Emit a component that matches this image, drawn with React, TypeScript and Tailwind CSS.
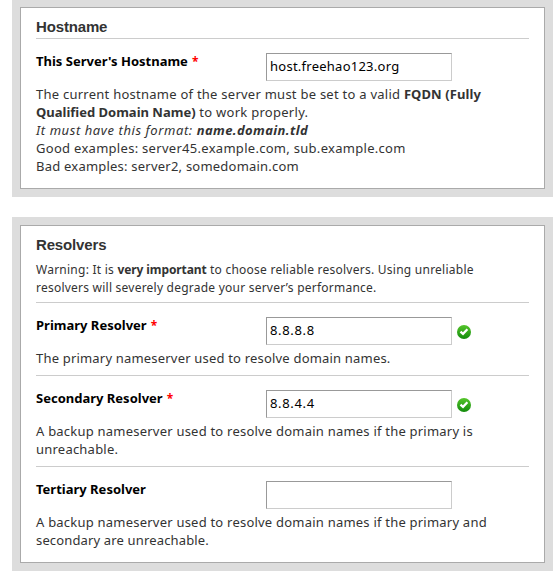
import type { ReactNode } from "react";

function Panel({ title, children }: { title: string; children: ReactNode }) {
  return (
    <section className="w-[541px] bg-[#dddddd] p-2">
      <div className="border border-[#aaaaaa] bg-white px-[15px]">
        <h2 className="h-[30px] pt-[9px] font-['Liberation_Sans',sans-serif] text-[15px] font-bold leading-5 tracking-[-0.15px] text-[#333333]">
          {title}
        </h2>
        {children}
      </div>
    </section>
  );
}

function ValidIcon() {
  return (
    <svg width="14" height="14" viewBox="0 0 14 14" className="mt-[9px] ml-[5px] shrink-0">
      <defs>
        <linearGradient id="valid-fill" x1="0" y1="0" x2="0" y2="1">
          <stop offset="0" stopColor="#55c52b" />
          <stop offset="1" stopColor="#128b0c" />
        </linearGradient>
      </defs>
      <circle cx="7" cy="7" r="7" fill="url(#valid-fill)" />
      <path d="M3.5 6.7 6 8.9 10.4 4.3" fill="none" stroke="#fff" strokeWidth="2.3" />
    </svg>
  );
}

type FieldProps = {
  label: string;
  value: string;
  required?: boolean;
  valid?: boolean;
  children: ReactNode;
};

function Field({ label, value, required, valid, children }: FieldProps) {
  return (
    <div className="border-t border-[#cccccc] pt-[13px]">
      <div className="flex h-[33px] items-start">
        <label className="flex w-[230px] text-[13px] font-bold leading-[18px] whitespace-nowrap text-black">
          {label}
          {required && <span className="ml-1 pt-px text-[12px] font-bold text-[#ff0000]">*</span>}
        </label>
        <input
          readOnly
          defaultValue={value}
          aria-label={label}
          className={`mt-px h-7 w-[186px] border border-t-[#999999] border-r-[#cccccc] border-b-[#cccccc] border-l-[#999999] bg-white px-[3px] pb-0.5 text-[13px] text-black outline-none ${valid ? "tracking-[0.65px]" : "tracking-[0.25px]"}`}
        />
        {valid && <ValidIcon />}
      </div>
      <div className="text-[13px] leading-[18px] tracking-[0.22px] whitespace-nowrap">{children}</div>
    </div>
  );
}

export default function App() {
  return (
    <main className="flex h-[576px] flex-col gap-5 overflow-hidden bg-white pl-3 font-['Noto_Sans',sans-serif] text-[#333333]">
      <div className="-mt-px">
        <Panel title="Hostname">
          <div className="pb-[13px]">
            <Field label="This Server's Hostname" value="host.freehao123.org" required>
              <p className="tracking-[0.25px]">The current hostname of the server must be set to a valid <b className="tracking-[0.1px]">FQDN (Fully</b></p>
              <p className="tracking-[0.28px]"><b className="tracking-normal">Qualified Domain Name)</b> to work properly.</p>
              <p className="italic tracking-[0.58px]">It must have this format: <b className="tracking-[0.4px]">name.domain.tld</b></p>
              <p className="tracking-[0.29px]">Good examples: server45.example.com, sub.example.com</p>
              <p>Bad examples: server2, somedomain.com</p>
            </Field>
          </div>
        </Panel>
      </div>
      <Panel title="Resolvers">
        <div className="h-[46px] pt-[5px] text-[12px] leading-[18px] tracking-[0.25px] whitespace-nowrap">
          <p>Warning: It is <b className="tracking-[-0.1px]">very important</b> to choose reliable resolvers. Using unreliable</p>
          <p className="tracking-[0.23px]">resolvers will severely degrade your server’s performance.</p>
        </div>
        <div className="flex flex-col gap-2 pb-[13px]">
          <Field label="Primary Resolver" value="8.8.8.8" required valid>
            <p className="tracking-[0.19px]">The primary nameserver used to resolve domain names.</p>
          </Field>
          <Field label="Secondary Resolver" value="8.8.4.4" required valid>
            <p>A backup nameserver used to resolve domain names if the primary is</p>
            <p>unreachable.</p>
          </Field>
          <Field label="Tertiary Resolver" value="">
            <p>A backup nameserver used to resolve domain names if the primary and</p>
            <p className="tracking-[0.15px]">secondary are unreachable.</p>
          </Field>
        </div>
      </Panel>
    </main>
  );
}
